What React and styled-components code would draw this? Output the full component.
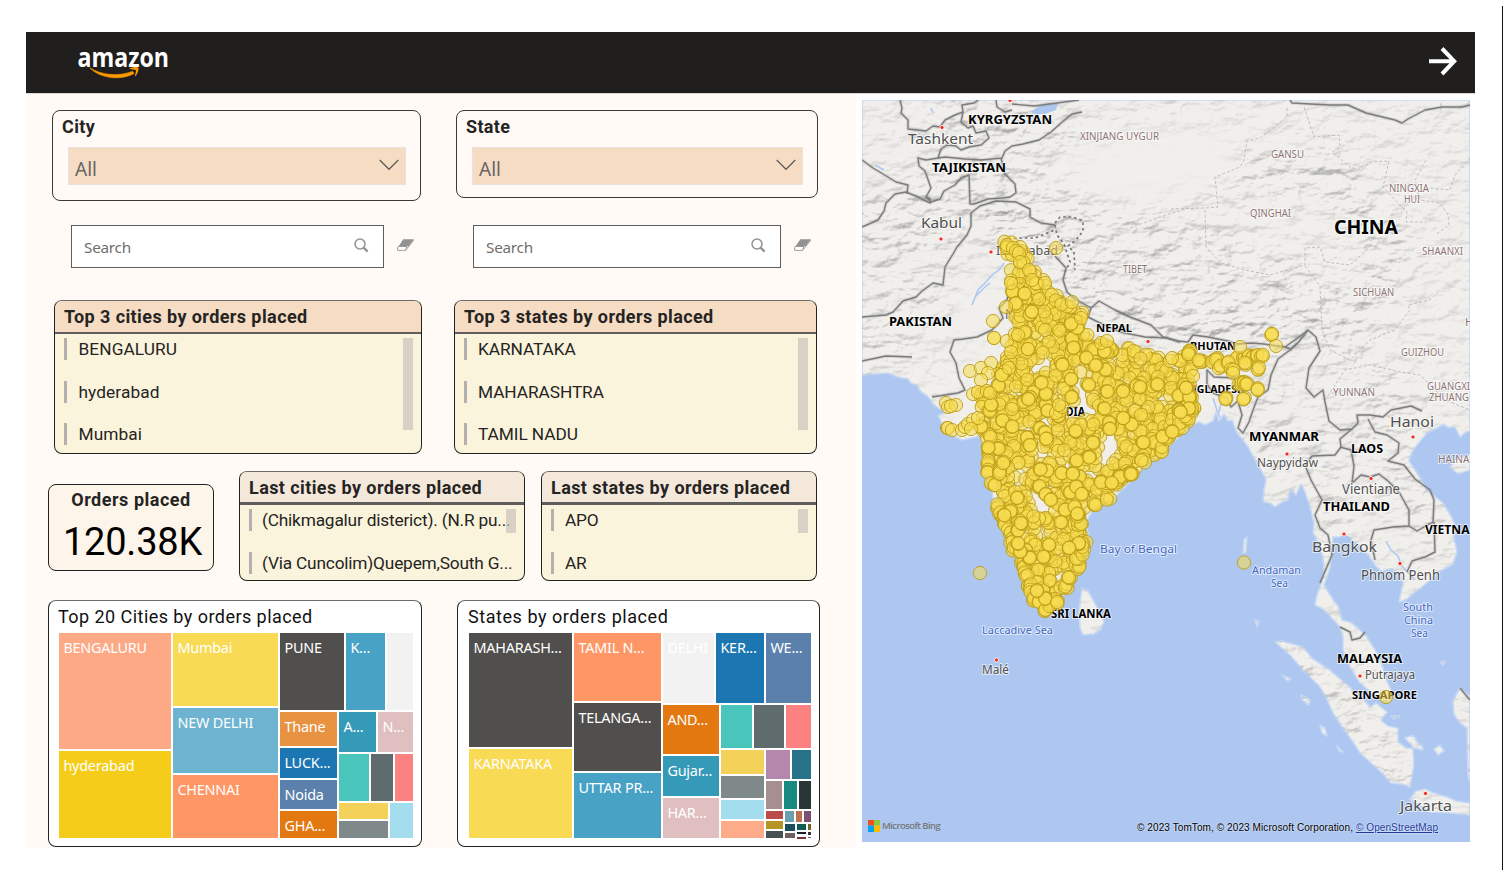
import React from 'react';
import styled, { createGlobalStyle } from 'styled-components';

const DIN = 'Roboto, "Liberation Sans", sans-serif';
const UI = '"Noto Sans", "Open Sans", sans-serif';

const Global = createGlobalStyle`
  * { box-sizing: border-box; }
  body { margin: 0; background: #fff; font-family: ${UI}; overflow: hidden; }
`;

const Page = styled.div`
  width: 1503px;
  height: 870px;
  padding: 32px 0 0 26px;
  background: linear-gradient(#111, #111) right 6px / 1px 864px no-repeat #fff;
  background-position: right 0 top 6px;
`;
const Report = styled.div`
  width: 1449px;
  height: 816px;
  display: flex;
  flex-direction: column;
`;
const Header = styled.header`
  height: 62px;
  background: #211f1e;
  border-bottom: 1px solid #ddd6d0;
  display: flex;
  justify-content: space-between;
  align-items: center;
  padding: 0 18px 3px 50px;
  svg { overflow: visible; }
`;
const Body = styled.div`
  display: flex;
  flex: 1;
  min-height: 0;
`;
const Panel = styled.main`
  width: 830px;
  background: #fffaf6;
  padding: 16px 0 0 22px;
  display: flex;
  flex-direction: column;
`;
const Row = styled.div`
  display: flex;
  align-items: flex-start;
  height: ${(p) => p.$h}px;
  gap: ${(p) => p.$gap || 0}px;
  padding-left: ${(p) => p.$left || 0}px;
`;
const Card = styled.section`
  width: ${(p) => p.$w}px;
  height: ${(p) => p.$h}px;
  margin-top: ${(p) => p.$top || 0}px;
  border: 1px solid #222;
  border-top-color: ${(p) => (p.$soft ? '#6d6a67' : '#222')};
  border-radius: 8px;
  background: ${(p) => p.$bg || 'transparent'};
  overflow: hidden;
  flex: none;
`;
const SlicerCard = styled(Card)`
  padding: 4px 14px 0 9px;
  border-color: #3a3938;
`;
const SlicerTitle = styled.h2`
  margin: 0;
  font: 700 18px/24px ${DIN};
  letter-spacing: 0.35px;
  color: #252423;
`;
const Select = styled.div`
  height: 38px;
  margin: 8px 0 0 6px;
  padding: 5px 6px 0 6px;
  border: 1px solid #e8e3df;
  background: #f5dcc3;
  display: flex;
  justify-content: space-between;
  align-items: center;
  font-size: 19px;
  color: #666;
  svg { margin-top: -8px; }
`;
const SearchBox = styled.div`
  width: ${(p) => p.$w}px;
  height: 43px;
  border: 1px solid #605e5c;
  background: #fff;
  display: flex;
  align-items: center;
  justify-content: space-between;
  padding: 1px 14px 0 12px;
  font-size: 15.3px;
  letter-spacing: -0.25px;
  color: #706e6c;
  flex: none;
`;
const EraserSlot = styled.div`
  width: ${(p) => p.$w}px;
  padding: 14px 0 0 13px;
  flex: none;
`;
const ListHead = styled.h2`
  margin: 0;
  height: ${(p) => p.$h}px;
  padding-left: 9px;
  border-bottom: ${(p) => p.$line}px solid #605e5c;
  background: ${(p) => p.$bg};
  font: 700 18px/32px ${DIN};
  letter-spacing: 0.41px;
  color: #252423;
  white-space: nowrap;
`;
const ListBody = styled.div`
  position: relative;
  padding: 4px 9px;
`;
const Item = styled.div`
  display: flex;
  height: 42.6px;
  align-items: flex-start;
  font: 400 17.3px/22px ${DIN};
  letter-spacing: ${(p) => p.$ls ?? 0.08}px;
  color: #252423;
  white-space: nowrap;
  &::before {
    content: '';
    flex: none;
    width: 3px;
    height: 22px;
    margin-right: ${(p) => p.$gap}px;
    background: #b3b0ad;
  }
`;
const Thumb = styled.i`
  position: absolute;
  right: 8px;
  top: 4px;
  width: 10px;
  height: ${(p) => p.$h}px;
  background: rgba(200, 191, 186, 0.68);
`;
const Kpi = styled(Card)`
  display: flex;
  flex-direction: column;
  align-items: center;
  h2 { margin: 3px 0 0; font: 700 18px/24px ${DIN}; letter-spacing: 0.52px; color: #252423; }
  strong { margin: 7px 0 0 3px; font: 400 38px/47px ${DIN}; letter-spacing: -0.2px; color: #000; }
`;
const ChartCard = styled(Card)`
  padding: 0 7px 0 ${(p) => p.$pad}px;
  h2 { margin: 0 0 0 -1px; height: 32px; font: 400 18px/31px ${DIN}; letter-spacing: ${(p) => p.$ls}px; color: #111; white-space: nowrap; }
`;
const Split = styled.div`
  display: flex;
  flex-direction: ${(p) => (p.$col ? 'column' : 'row')};
  gap: 2px;
  flex: none;
`;
const Tile = styled.div`
  width: ${(p) => p.$w}px;
  height: ${(p) => p.$h}px;
  flex: none;
  background: ${(p) => p.$c};
  color: #fff;
  font-size: 14.4px;
  line-height: 20px;
  letter-spacing: -0.2px;
  padding: ${(p) => (p.$h > 25 && p.$label ? '5px 0 0 4.4px' : 0)};
  white-space: nowrap;
  overflow: hidden;
`;

/* Treemap nodes: leaf = [width, height, colour, label]; group = { col, kids } */
const row = (...kids) => ({ kids });
const col = (...kids) => ({ col: true, kids });
function Tree({ node }) {
  if (Array.isArray(node)) {
    const [w, h, c, label] = node;
    return <Tile $w={w} $h={h} $c={c} $label={label}>{label}</Tile>;
  }
  return <Split $col={node.col}>{node.kids.map((k, i) => <Tree key={i} node={k} />)}</Split>;
}

const cityTree = row(
  col([112, 116, '#fea985', 'BENGALURU'], [112, 87, '#f6cc1a', 'hyderabad']),
  col([105, 73, '#f8da55', 'Mumbai'], [105, 65, '#6eb4d1', 'NEW DELHI'], [105, 63, '#fe9666', 'CHENNAI']),
  col(
    row([64, 77, '#504f4d', 'PUNE'], [39, 77, '#48a2c6', 'K...'], [26, 77, '#f2f2f2']),
    row(
      col([57, 34, '#e89342', 'Thane'], [57, 30, '#1b76b2', 'LUCK...'], [57, 29, '#5b80ab', 'Noida'], [57, 27, '#e37811', 'GHA...']),
      col(
        row([37, 40, '#3599b8', 'A...'], [35, 40, '#dfbfbf', 'N...']),
        row([30, 47, '#4ac5bb'], [22, 47, '#5f6b6d'], [18, 47, '#fb8281']),
        row(col([49, 16, '#f4d25a'], [49, 17, '#7f898a']), [23, 35, '#a4ddee'])
      )
    )
  )
);

const stateTree = row(
  col([103, 114, '#504f4d', 'MAHARASH...'], [103, 89, '#f8da55', 'KARNATAKA']),
  col([87, 68, '#fe9666', 'TAMIL N...'], [87, 68, '#504f4d', 'TELANGA...'], [87, 65, '#48a2c6', 'UTTAR PR...']),
  col(
    row([51, 70, '#f2f2f2', 'DELHI'], [48, 70, '#1b76b2', 'KER...'], [45, 70, '#5b80ab', 'WE...']),
    row(
      col([56, 49, '#e37811', 'AND...'], [56, 40, '#3599b8', 'Gujar...'], [56, 40, '#dfbfbf', 'HAR...']),
      col(
        row([31, 43, '#4ac5bb'], [30, 43, '#5f6b6d'], [25, 43, '#fb8281']),
        row(
          col([43, 24, '#f4d25a'], [43, 22, '#7f898a'], [43, 19, '#a4ddee'], [43, 17, '#fdab89']),
          col(
            row([24, 29, '#b687ac'], [19, 29, '#28738a']),
            row([16, 28, '#a78f8f'], [13, 28, '#168980'], [12, 28, '#293537']),
            row(
              col([17, 8, '#bb4a4a'], [17, 8, '#b59525'], [17, 7, '#475052']),
              col(
                row([9, 11, '#6a9fb0'], [6, 11, '#bd7150'], [7, 11, '#7b4f71']),
                row(
                  col([10, 7, '#1b4d5c'], [10, 5, '#706060']),
                  col(
                    row([9, 6, '#0f5c55'], [3, 6, '#796419']),
                    row([9, 2, '#1c2325'], [3, 3, '#303637']),
                    row([9, 2, '#7d3231'], [3, 1, '#466a76'])
                  )
                )
              )
            )
          )
        )
      )
    )
  )
);

function Eraser() {
  return (
    <svg width="17" height="12" viewBox="0 0 17 12" display="block">
      <path d="M6.3 0.3H16.8L11.7 7H1.8Z" fill="#929292" />
      <path d="M1.6 7L0.7 8.6V11.3H8.5L16.2 2V0.6M1 7.5H10L8.5 11.2" fill="none" stroke="#999" />
      <path d="M2.4 7.9H9L7.9 10.6H1.5Z" fill="#fff" />
    </svg>
  );
}
const Glass = styled.svg`
  margin-top: -3px;
`;
function SearchIcon() {
  return (
    <Glass width="15" height="15" viewBox="0 0 15 15">
      <circle cx="6" cy="6" r="5" fill="none" stroke="#929292" strokeWidth="1.5" />
      <path d="M9.6 9.6L13.6 13.6" stroke="#929292" strokeWidth="2.2" />
    </Glass>
  );
}
function Slicer({ title, w, h }) {
  return (
    <SlicerCard $w={w} $h={h}>
      <SlicerTitle>{title}</SlicerTitle>
      <Select>
        All
        <svg width="20" height="12" viewBox="0 0 20 12"><path d="M0.7 1L10 10.3L19.3 1" fill="none" stroke="#605e5c" strokeWidth="1.3" /></svg>
      </Select>
    </SlicerCard>
  );
}
function ListCard({ title, items, w, h, head, headBg, line, thumb, gap = 12, ls }) {
  return (
    <Card $w={w} $h={h} $bg="#fbf4dc" $soft>
      <ListHead $h={head} $bg={headBg} $line={line}>{title}</ListHead>
      <ListBody>
        {items.map((t) => <Item key={t} $gap={gap} $ls={ls}>{t}</Item>)}
        <Thumb $h={thumb} />
      </ListBody>
    </Card>
  );
}

/* ---------- Map ---------- */
const MapBox = styled.aside`
  position: relative;
  width: 608px;
  height: 742px;
  margin: 6px 0 0 6px;
  background: #adc7f1;
  overflow: hidden;
  > svg { display: block; }
`;
const Bing = styled.div`
  position: absolute;
  left: 6px;
  bottom: 10px;
  display: flex;
  align-items: center;
  gap: 2px;
  font: 600 9.6px/13px "Open Sans", sans-serif;
  letter-spacing: -0.62px;
  color: #75777d;
  white-space: nowrap;
`;
const Credit = styled.div`
  position: absolute;
  left: 275px;
  bottom: 8px;
  font: 400 10px/13px "Liberation Sans", sans-serif;
  letter-spacing: 0.095px;
  color: #000;
  white-space: nowrap;
  text-shadow: 0 0 2px #fff;
  u { color: #1b3a9c; }
`;

const MAINLAND =
  'M862 375L875 374 888 373 898 377 908 379 911 383 918 386 920 391 927 396 930 399 933 404 938 408 946 412 938 416 941 421 943 428 950 434 962 440 972 438 980 436 984 450 984 473 992 490 995 513 1005 533 1015 557 1025 583 1032 603 1045 614 1055 608 1062 597 1072 580 1085 560 1090 540 1085 523 1095 507 1112 500 1132 480 1148 463 1165 450 1180 436 1190 426 1199 422 1205 425 1213 421 1216 412 1219 421 1224 414 1228 421 1232 420 1237 433 1243 440 1248 447 1255 460 1260 468 1266 480 1264 490 1263 502 1270 503 1275 507 1282 502 1288 500 1291 489 1296 495 1301 484 1305 492 1310 507 1314 523 1313 532 1318 543 1323 557 1324 570 1321 584 1317 595 1315 605 1323 609 1330 616 1340 627 1343 637 1343 650 1350 667 1360 683 1377 697 1389 702 1392 692 1386 679 1382 665 1377 653 1367 637 1358 628 1350 622 1342 620 1338 606 1334 601 1327 590 1324 585 1330 568 1332 553 1333 537 1341 537 1344 544 1351 541 1357 543 1364 551 1369 556 1375 565 1381 571 1391 569 1400 573 1403 583 1399 602 1406 600 1418 590 1428 582 1437 573 1453 564 1457 552 1454 538 1456 527 1451 516 1443 503 1427 490 1417 473 1409 461 1412 452 1417 445 1427 433 1437 428 1443 424 1449 428 1455 427 1460 437 1466 432 1470 431V100H862Z';
const ISLANDS = [
  'M1450 467L1459 458 1470 455V470L1458 474Z',
  'M1082 588L1088 591 1093 600 1099 611 1104 622 1101 629 1094 634 1083 635 1080 628 1079 612Z',
  'M1275 642L1282 641 1303 647 1312 658 1319 663 1330 670 1339 678 1350 687 1354 694 1363 699 1370 707 1376 703 1387 712 1381 720 1388 726 1398 728 1398 742 1405 747 1413 749 1414 765 1410 787 1402 784 1391 783 1380 771 1370 762 1360 753 1353 742 1345 731 1333 713 1326 697 1320 687 1303 670 1290 655Z',
  'M1410 799L1416 791 1425 789 1434 793 1447 797 1456 801 1470 803V815L1450 813 1430 812Z',
  'M1470 696L1460 688 1453 701 1454 714 1459 722 1467 728 1468 775 1470 782Z',
  'M1405 738L1413 735 1417 742 1422 746 1423 750 1414 748Z',
  'M1434 749L1440 745 1444 751 1438 755Z', 'M1282 675L1291 679 1287 681Z', 'M1301 695L1310 700 1309 705 1302 700Z',
  'M1320 725L1325 728 1327 736 1322 733Z', 'M1337 746L1343 752 1339 751Z', 'M1255 620L1259 622 1257 627Z', 'M1244 540L1247 537 1246 552 1243 553Z', 'M1440 662L1445 661 1443 665Z', 'M1391 716L1400 716 1394 719Z',
];

const BORDERS = [
  'M900 100L902 108 901 113 908 120 908 129 926 131 933 126 940 127 945 120 955 115 963 112 962 105 974 103 978 100',
  'M963 112L961 122 968 128 973 126 976 133 986 131 989 138 981 145 969 147 961 150 956 146 947 145 941 149 938 158 926 160 918 158 919 166 925 171 931 188 926 197 930 199 930 203 918 197 906 192 895 194 886 203 884 211 878 220 862 227',
  'M862 160L873 168 888 177 896 182 908 185 907 194',
  'M996 100L997 107 1005 112 1012 110',
  'M1012 104L1034 106 1057 103 1079 100M1082 112L1072 114 1061 123 1051 132 1039 140 1023 144 1012 146 1005 151 1002 158 981 160 965 159 945 157 938 158',
  'M926 197L931 202 940 199 944 191 955 185 961 178 969 175 970 204 974 204 988 199 1002 198 1010 197 1016 193 1015 184 1005 174 1001 158',
  'M1016 202L1030 209 1030 217 1041 223 1055 225M1016 202L996 201 980 206 971 213 971 226 967 235 957 247 953 254 945 267 943 285 933 283 922 291 916 297 903 301 893 312 886 315 862 317',
  'M862 361L886 356 912 357',
  'M1055 256L1066 268 1063 280 1067 292 1075 299 1084 304 1091 308 1088 317 1098 322 1120 332 1145 337 1167 338 1180 342',
  'M1011 283L1007 300 999 308 1003 318 992 330 977 337 963 339 954 340 950 352 956 363 959 378 965 390 958 393 932 397',
  'M1091 308L1099 301 1115 310 1130 317 1151 325 1163 337 1178 341 1188 342 1193 335 1208 337 1228 341 1237 344 1251 343 1264 344 1285 347 1299 337 1308 330 1316 337 1320 351 1309 368 1306 388 1314 397 1323 390 1325 402 1329 421 1340 430 1352 429 1358 423 1357 415 1370 415 1383 417 1391 410 1411 406 1422 411',
  'M1308 330L1297 344 1290 350 1278 359 1271 375 1268 390 1258 397 1253 410 1249 422 1243 433 1238 428 1242 415 1238 401 1231 407 1227 398 1213 393 1207 384 1207 370 1214 377 1237 378',
  'M1285 347L1291 349 1297 343',
  'M1352 429L1340 439 1341 447 1335 455 1312 456 1305 465 1311 480 1322 500 1315 515 1320 528 1328 535 1332 555 1320 583',
  'M1340 447L1351 450 1354 466 1352 483 1361 475 1370 477 1379 474 1388 481 1399 492 1409 510 1409 526 1393 527 1374 530 1371 540 1375 560',
  'M1409 526L1417 531 1424 527 1433 522 1434 500 1430 490 1415 479 1404 465 1388 461 1398 453 1399 443 1387 435 1375 432 1368 419',
  'M1434 522L1435 552 1425 557 1412 561 1407 572',
  'M1340 627L1350 632 1352 640 1360 638 1365 632', 'M1460 688L1470 700',
  'M1290 100L1292 103 1330 105 1348 105 1366 113 1395 120 1402 123 1408 119 1425 110 1442 107 1462 107 1470 105',
];
const DASHED = [
  'M1055 223L1060 217 1073 217 1083 221 1083 231 1076 240 1068 246 1074 252 1075 270',
  'M1055 225L1057 235 1064 244 1070 262 1065 272', 'M1003 240L1018 238 1035 238 1055 230',
];
const PROVINCES = [
  'M1287 108V117L1260 138 1247 141 1244 160 1240 167 1215 177 1218 207 1205 208 1170 209',
  'M1304 107L1314 137 1339 135 1340 148 1332 152 1350 167 1362 170 1370 162 1389 161 1383 187 1395 200 1407 212 1406 222 1426 222',
  'M1205 210L1206 247 1221 263 1245 270 1270 275 1305 265 1305 248 1320 247 1325 262 1350 265 1368 249',
  'M1426 160L1415 180 1420 200 1440 203 1448 215 1449 225 1435 235', 'M1470 158L1455 175 1450 190 1430 188',
  'M1305 266L1320 286 1322 330 1330 350 1350 360 1370 340 1395 330 1410 310 1408 305 1430 300 1440 290',
  'M1325 400L1345 370 1370 365 1400 372 1420 375 1430 385 1445 400 1470 410', 'M1441 103V110', 'M1130 228L1160 217 1186 209',
];
const RIVERS = [
  'M972 305L978 290 985 283 992 275 999 270 1004 263', 'M975 297L985 287 990 283', 'M1386 541L1391 550 1398 556 1401 565M1401 565L1415 580',
  'M1213 398L1217 410 1220 418M1222 400L1219 412', 'M907 133L914 137 935 137', 'M875 165L884 170', 'M931 108L933 113',
];
/* [x1, width, baseline, text, size, kind] */
const LABELS = [
  [968, 84, 124, 'KYRGYZSTAN', 13, 'c'], [932, 74, 172, 'TAJIKISTAN', 13, 'c'], [889, 63, 326, 'PAKISTAN', 13, 'c'],
  [1334, 64, 234, 'CHINA', 19, 'c'], [1096, 36, 332, 'NEPAL', 11, 'c'], [1190, 46, 350, 'BHUTAN', 11, 'c'],
  [1053, 32, 416, 'INDIA', 11.5, 'c'], [1174, 71, 393, 'BANGLADESH', 11, 'c'], [1249, 70, 441, 'MYANMAR', 13, 'c'],
  [1351, 32, 453, 'LAOS', 13, 'c'], [1323, 67, 511, 'THAILAND', 13, 'c'], [1425, 56, 534, 'VIETNAM', 13, 'c'],
  [1337, 65, 663, 'MALAYSIA', 13, 'c'], [1352, 65, 699, 'SINGAPORE', 11, 'c'], [1051, 60, 618, 'SRI LANKA', 11.5, 'c'],
  [908, 65, 144, 'Tashkent', 15, 't'], [921, 41, 228, 'Kabul', 15, 't'], [996, 62, 255, 'Islamabad', 13, 't'],
  [1005, 60, 319, 'New Delhi', 14, 't'], [1390, 44, 427, 'Hanoi', 15, 't'], [1257, 61, 467, 'Naypyidaw', 12.5, 't'],
  [1342, 58, 494, 'Vientiane', 13.5, 't'], [1312, 65, 552, 'Bangkok', 15, 't'], [1361, 79, 580, 'Phnom Penh', 13.5, 't'],
  [1365, 50, 679, 'Putrajaya', 12.5, 't'], [1400, 52, 811, 'Jakarta', 15, 't'], [982, 27, 674, 'Malé', 12.5, 't'],
  [1080, 79, 140, 'XINJIANG UYGUR', 10, 'p'], [1271, 33, 158, 'GANSU', 10, 'p'], [1389, 40, 192, 'NINGXIA', 10, 'p'],
  [1404, 16, 203, 'HUI', 10, 'p'], [1250, 41, 217, 'QINGHAI', 10, 'p'], [1422, 41, 255, 'SHAANXI', 10, 'p'],
  [1353, 41, 296, 'SICHUAN', 10, 'p'], [1123, 24, 273, 'TIBET', 10, 'p'], [1401, 43, 356, 'GUIZHOU', 10, 'p'],
  [1333, 42, 396, 'YUNNAN', 10, 'p'], [1427, 43, 390, 'GUANGXI', 10, 'p'], [1429, 40, 401, 'ZHUANG', 10, 'p'],
  [1438, 39, 463, 'HAINAN', 10, 'p'], [1465, 40, 326, 'HUNAN', 10, 'p'],
  [1100, 77, 553, 'Bay of Bengal', 11.5, 's'], [1252, 49, 574, 'Andaman', 11, 's'], [1271, 17, 587, 'Sea', 11, 's'],
  [1403, 30, 611, 'South', 11, 's'], [1404, 29, 624, 'China', 11, 's'], [1411, 17, 637, 'Sea', 11, 's'], [982, 71, 634, 'Laccadive Sea', 11, 's'],
];
const KIND = {
  c: { fill: '#000', weight: 700 }, t: { fill: '#505050', weight: 400 },
  p: { fill: '#8d7373', weight: 400 }, s: { fill: '#4167c4', weight: 400 },
};
const CAPITALS = [[942, 127.5], [941, 239], [991, 252], [1148, 341.5], [1287, 454], [1371, 478.5], [1413, 437], [1344, 534], [1400, 563.5], [1360, 676], [1425.5, 793.5], [996.5, 660], [1010, 100.5]];

const COVER = [[1003, 240], [1018, 243], [1030, 262], [1037, 276], [1050, 284], [1060, 300], [1078, 306], [1085, 315], [1085, 330], [1092, 344], [1115, 344], [1150, 352], [1168, 358], [1185, 355], [1198, 362], [1190, 375], [1190, 390], [1194, 408], [1190, 420], [1166, 440], [1158, 453], [1136, 470], [1108, 493], [1080, 512], [1080, 530], [1085, 545], [1080, 563], [1066, 580], [1056, 600], [1047, 608], [1037, 600], [1030, 580], [1018, 557], [1008, 530], [1000, 513], [1002, 490], [993, 477], [988, 460], [987, 440], [978, 424], [986, 404], [982, 395], [991, 385], [1004, 365], [1009, 345], [1015, 325], [1012, 300], [1010, 270]];
const COAST = [[981, 395], [984, 405], [990, 412], [984, 425], [988, 437], [987, 452], [989, 462], [988, 472], [993, 483], [1000, 473], [997, 507], [1001, 515], [1003, 522], [1010, 531], [1012, 540], [1015, 548], [1022, 560], [1025, 567], [1027, 575], [1030, 585], [1032, 592], [1035, 598], [1040, 603], [1046, 609], [1051, 605], [1057, 602], [1066, 586], [1070, 578], [1077, 567], [1078, 560], [1082, 552], [1084, 545], [1080, 523], [1078, 514], [1094, 503], [1108, 497], [1117, 482], [1128, 475], [1132, 472], [1143, 461], [1156, 444], [1160, 449], [1168, 438], [1180, 425], [1187, 417], [1193, 410], [1190, 397], [1185, 385]];
const GAPS = [[1046, 363, 9], [1036, 369, 9], [1071, 411, 8], [1080, 410, 11], [1083, 397, 9], [1046, 421, 8], [1112, 443, 11], [1107, 453, 10], [1104, 461, 8], [1040, 456, 8], [1039, 502, 9], [1018, 484, 7], [1060, 574, 7], [1080, 381, 7], [1092, 412, 9], [1018, 393, 6], [1000, 456, 6], [1044, 532, 6], [1092, 474, 8], [1022, 474, 6]];
const SINGLES = [[1060, 411], [1056, 413], [1062, 407], [1059, 405], [1056, 248], [1007, 245], [1013, 248], [1016, 251], [1019, 253], [993, 321], [994, 338], [994, 338], [1006, 307], [1007, 341], [1015, 334], [1018, 335], [1072, 302], [1081, 318], [1011, 283], [1020, 262], [1029, 270], [1032, 280], [1045, 283], [1039, 299], [1045, 330], [991, 363], [970, 371], [981, 368], [988, 373], [981, 380], [973, 394], [978, 392], [987, 391], [990, 393], [946, 403], [948, 407], [956, 405], [951, 406], [947, 428], [948, 428], [952, 430], [962, 430], [965, 427], [968, 424], [973, 420], [971, 429], [978, 418], [980, 573], [1244, 562.5], [1386, 697], [1057, 602], [1011, 352], [1009, 368], [1101, 343], [1107, 341], [1170, 361], [1172, 358]];
const NORTHEAST = [[1201, 362], [1189, 350], [1188, 353], [1200, 361], [1213, 361], [1217, 359], [1220, 367], [1237, 359], [1228, 362], [1232, 370], [1244, 357], [1249, 357], [1253, 357], [1257, 356], [1262, 356], [1258, 369], [1246, 364], [1240, 383], [1243, 383], [1247, 385], [1257, 389], [1226, 398], [1244, 399], [1271, 335]];

function inside([x, y], poly) {
  let hit = false;
  for (let i = 0, j = poly.length - 1; i < poly.length; j = i++) {
    const [xi, yi] = poly[i];
    const [xj, yj] = poly[j];
    if (yi > y !== yj > y && x < ((xj - xi) * (y - yi)) / (yj - yi) + xi) hit = !hit;
  }
  return hit;
}
function buildDots() {
  let s = 20230;
  const rnd = () => ((s = (s * 1103515245 + 12345) % 2147483648) / 2147483648);
  const out = [];
  const free = (x, y) => GAPS.every(([gx, gy, r]) => Math.hypot(x - gx, y - gy) > r);
  let n = 0;
  while (n < 1250) {
    const x = 960 + rnd() * 245;
    const y = 238 + rnd() * 375;
    if (inside([x, y], COVER) && free(x, y)) { out.push([x, y]); n += 1; }
  }
  COAST.forEach(([x, y]) => {
    for (let k = 0; k < 4; k++) out.push([x + rnd() * 5 - 2.5, y + rnd() * 6 - 3]);
  });
  for (let k = 0; k < 110; k++) {
    const i = Math.floor(rnd() * (n - 1));
    for (let m = 0; m < 3; m++) out.push([out[i][0] + rnd() * 1.4, out[i][1] + rnd() * 1.4]);
  }
  NORTHEAST.forEach(([x, y]) => {
    for (let k = 0; k < 3; k++) out.push([x + rnd() * 3 - 1.5, y + rnd() * 3 - 1.5]);
  });
  return out.concat(SINGLES, [[1276, 346], [1240, 347], [1193, 376], [1233, 373]]);
}
const DOTS = buildDots();

function WorldMap() {
  return (
    <svg width="608" height="742" viewBox="862 100 608 742" fontFamily='"Noto Sans", sans-serif'>
      <defs>
        <filter id="relief" x="0" y="0" width="1" height="1" colorInterpolationFilters="sRGB">
          <feTurbulence type="fractalNoise" baseFrequency="0.04 0.07" numOctaves="4" seed="11" />
          <feDiffuseLighting surfaceScale="6" diffuseConstant="1" lightingColor="#fff">
            <feDistantLight azimuth="235" elevation="60" />
          </feDiffuseLighting>
          <feColorMatrix values="0 0 0 0 .42  0 0 0 0 .42  0 0 0 0 .42  -1.5 0 0 0 1.24" />
        </filter>
        <filter id="soft"><feGaussianBlur stdDeviation="12" /></filter>
        <clipPath id="land"><path d={MAINLAND} />{ISLANDS.map((d) => <path key={d} d={d} />)}</clipPath>
        <mask id="hills" maskUnits="userSpaceOnUse" x="862" y="100" width="608" height="742">
          <rect x="862" y="100" width="608" height="742" fill="#3a3a3a" />
          <g fill="none" stroke="#e0e0e0" strokeLinecap="round" filter="url(#soft)">
            <path d="M862 240L930 215 1000 190 1080 220 1180 260 1260 290 1320 320" strokeWidth="75" stroke="#888" />
            <path d="M960 120L1060 130M1000 215L1060 260 1110 305 1180 330 1280 325" strokeWidth="24" />
            <path d="M862 330L900 350 M890 300L940 290" strokeWidth="35" stroke="#888" />
            <path d="M1200 180L1330 170 1380 225 1390 270 1340 330 1300 300" strokeWidth="34" stroke="#999" />
            <path d="M1330 350L1400 400 1360 430 M1270 400L1262 450 M1318 430L1330 520 M1390 450L1440 540" strokeWidth="28" stroke="#888" />
            <path d="M1285 650L1330 700 1400 780" strokeWidth="10" />
          </g>
          <g fill="#000" filter="url(#soft)">
            <path d="M1085 150Q1180 120 1245 145L1230 185 1120 205 1060 190Z" />
            <path d="M970 265L1005 290 1010 340 950 335Z" />
            <path d="M975 350L1080 345 1190 370 1240 410 1150 460 1090 510 1050 600 990 490 940 420Z" />
          </g>
        </mask>
      </defs>
      <g fill="#f0efec" stroke="#c8d9f5" strokeWidth="1.6" strokeLinejoin="round">
        <path d={MAINLAND} />
        {ISLANDS.map((d) => <path key={d} d={d} />)}
      </g>
      <g clipPath="url(#land)">
        <g mask="url(#hills)"><rect x="862" y="100" width="608" height="742" filter="url(#relief)" /></g>
      </g>
      <path d="M1030 112L1041 105 1058 103 1056 110 1045 114 1036 114Z M1341 545L1337 540 1344 534 1352 538 1349 545Z" fill="#adc7f1" />
      <g fill="none" stroke="#adc7f1" strokeWidth="1.5">{RIVERS.map((d) => <path key={d} d={d} />)}</g>
      <g fill="none" stroke="#b9b9b9" strokeWidth=".9" strokeDasharray="3 2">{PROVINCES.map((d) => <path key={d} d={d} />)}</g>
      <g fill="none" stroke="#777" strokeWidth="1.7" strokeDasharray="2.5 3">{DASHED.map((d) => <path key={d} d={d} />)}</g>
      <g fill="none" stroke="#999" strokeOpacity=".25" strokeWidth="3.6" strokeLinejoin="round">{BORDERS.map((d) => <path key={d} d={d} />)}</g>
      <g fill="none" stroke="#7c7c7c" strokeWidth="1.4" strokeLinejoin="round">{BORDERS.map((d) => <path key={d} d={d} />)}</g>
      {CAPITALS.map(([x, y]) => <circle key={x} cx={x} cy={y} r="2.1" fill="#ee2c24" stroke="#fff" strokeWidth=".8" />)}
      {LABELS.map(([x, w, y, t, size, kind]) => (
        <text key={t + y} x={x} y={y} textLength={w} lengthAdjust="spacingAndGlyphs" fontSize={size} fontWeight={KIND[kind].weight}
          fill={KIND[kind].fill} stroke="#fff" strokeOpacity=".65" strokeWidth="2" strokeLinejoin="round" paintOrder="stroke">{t}</text>
      ))}
      <g fill="#f8dc50" fillOpacity=".55" stroke="#bd9d18" strokeOpacity=".9" strokeWidth="1">
        {DOTS.map(([x, y], i) => <circle key={i} cx={x} cy={y} r="6.6" />)}
      </g>
    </svg>
  );
}

export default function App() {
  return (
    <>
      <Global />
      <Page>
        <Report>
          <Header>
            <svg width="96" height="40" viewBox="76 42 96 40">
              <text x="77.5" y="67.5" textLength="91.5" lengthAdjust="spacingAndGlyphs" fontFamily='"Open Sans", sans-serif' fontWeight="700" fontSize="27.5" fill="#fff">amazon</text>
              <path d="M90 69C101 76 118 78 132.5 72.4L134 74.4C121 81.6 101 79.8 90 69Z" fill="#ff9900" stroke="#ff9900" strokeWidth=".7" />
              <path d="M129 69.8C133 67.6 137.6 67.6 138.4 68.8C139 71 137.4 75.2 135.2 77.4C134.6 75.5 136.6 72.4 135.8 71.3C134.8 70.3 132 70.8 129 69.8Z" fill="#ff9900" />
            </svg>
            <svg width="29" height="30" viewBox="0 0 29 30"><path d="M1 15.2H26M14 2.5L26.2 15.2L14 28" fill="none" stroke="#fff" strokeWidth="4" /></svg>
          </Header>
          <Body>
            <Panel>
              <Row $h={115} $left={4} $gap={35}>
                <Slicer title="City" w={369} h={91} />
                <Slicer title="State" w={362} h={88} />
              </Row>
              <Row $h={75} $left={23}>
                <SearchBox $w={313}>Search<SearchIcon /></SearchBox>
                <EraserSlot $w={89}><Eraser /></EraserSlot>
                <SearchBox $w={308}>Search<SearchIcon /></SearchBox>
                <EraserSlot $w={40}><Eraser /></EraserSlot>
              </Row>
              <Row $h={171} $left={6} $gap={32}>
                <ListCard title="Top 3 cities by orders placed" w={368} h={154} head={33} headBg="#f5dcc3" line={2} thumb={92} gap={11.5}
                  items={['BENGALURU', 'hyderabad', 'Mumbai']} />
                <ListCard title="Top 3 states by orders placed" w={363} h={154} head={33} headBg="#f5dcc3" line={2} thumb={92} gap={11} ls={-0.08}
                  items={['KARNATAKA', 'MAHARASHTRA', 'TAMIL NADU']} />
              </Row>
              <Row $h={129}>
                <Kpi $w={166} $h={87} $top={13} $bg="#fdf4ea"><h2>Orders placed</h2><strong>120.38K</strong></Kpi>
                <Row $left={25} $gap={16}>
                  <ListCard title="Last cities by orders placed" w={286} h={110} head={33} headBg="#f4e8db" line={3} thumb={24} gap={10} ls={-0.19}
                    items={['(Chikmagalur disterict). (N.R pu...', '(Via Cuncolim)Quepem,South G...']} />
                  <ListCard title="Last states by orders placed" w={276} h={110} head={33} headBg="#f4e8db" line={3} thumb={24} gap={11} ls={-0.2}
                    items={['APO', 'AR']} />
                </Row>
              </Row>
              <Row $h={247} $gap={35}>
                <ChartCard $w={374} $h={247} $bg="#fff" $soft $ls={0.45} $pad={10}><h2>Top 20 Cities by orders placed</h2><Tree node={cityTree} /></ChartCard>
                <ChartCard $w={363} $h={247} $bg="#fff" $soft $ls={0.55} $pad={11}><h2>States by orders placed</h2><Tree node={stateTree} /></ChartCard>
              </Row>
            </Panel>
            <MapBox>
              <WorldMap />
              <Bing>
                <svg width="12" height="12" viewBox="0 0 12 12"><path fill="#f25022" d="M0 0h6v5.5H0z" /><path fill="#8dc63f" d="M6 0h6v5.5H6z" /><path fill="#00a4ef" d="M0 5.5h6V12H0z" /><path fill="#ffb900" d="M6 5.5h6V12H6z" /></svg>
                Microsoft Bing
              </Bing>
              <Credit>© 2023 TomTom, © 2023 Microsoft Corporation, <u>© OpenStreetMap</u></Credit>
            </MapBox>
          </Body>
        </Report>
      </Page>
    </>
  );
}
